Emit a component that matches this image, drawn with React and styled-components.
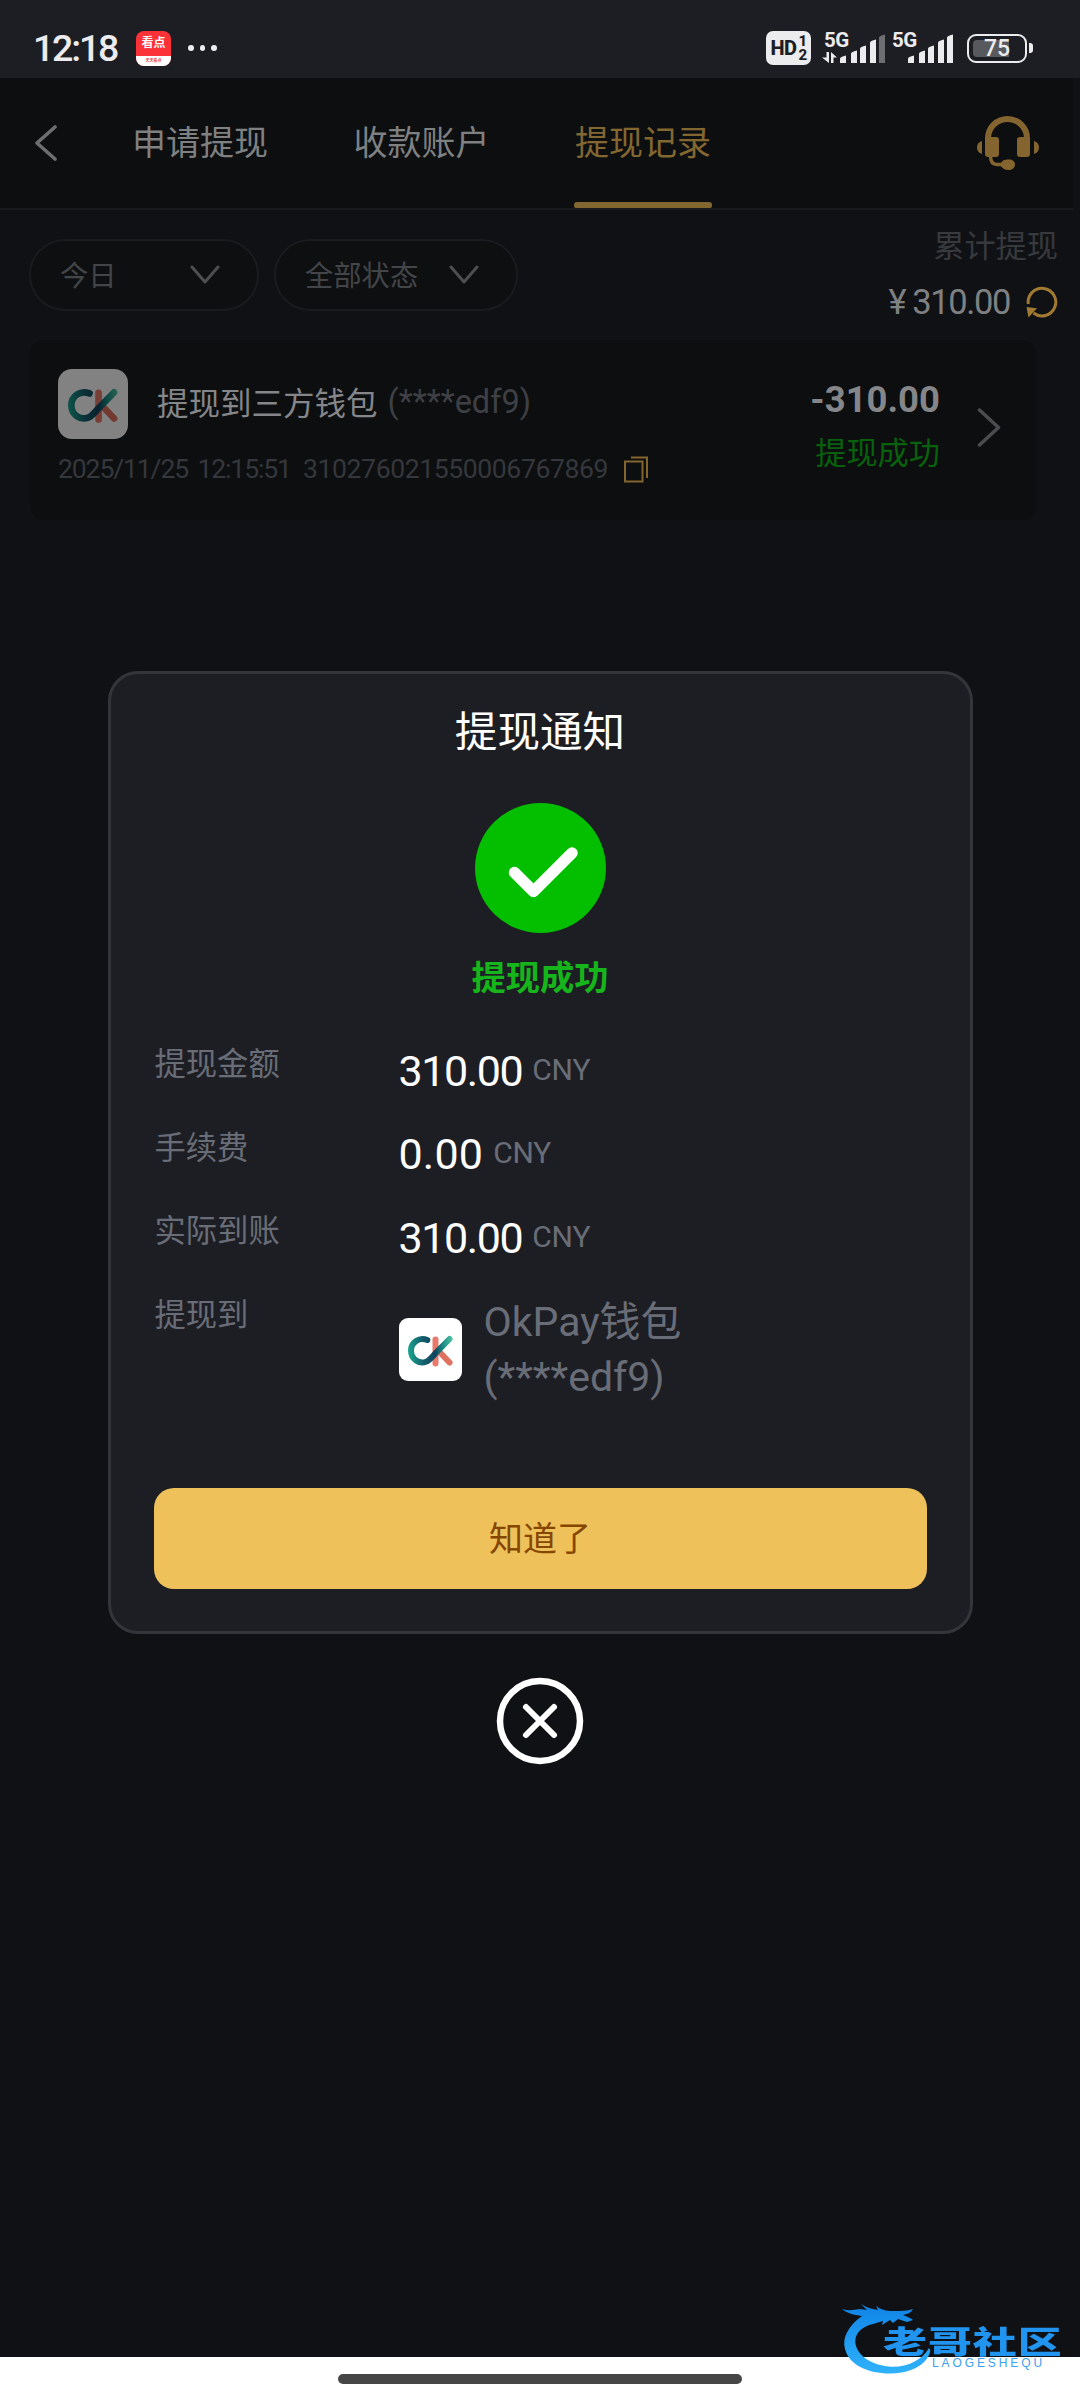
import React from "react";
import styled, { createGlobalStyle } from "styled-components";

const GlobalStyle = createGlobalStyle`
  *, *::before, *::after { box-sizing: border-box; }
  body {
    margin: 0;
    background: #101115;
    font-family: Roboto, "Noto Sans CJK SC", sans-serif;
  }
  button { font-family: inherit; border: 0; padding: 0; background: none; }
`;

const Screen = styled.div`
  position: relative;
  display: flex;
  flex-direction: column;
  width: 1080px;
  height: 2400px;
  overflow: hidden;
  background: #101115;
  white-space: nowrap;
`;

/* Status bar */
const StatusBar = styled.header`
  display: flex;
  align-items: center;
  height: 78px;
  padding: 18px 47px 0 33px;
  background: #1d1e23;
  color: #ececee;
`;
const Clock = styled.span`
  width: 103px;
  font-size: 37.5px;
  font-weight: 500;
  line-height: 60px;
  letter-spacing: -2.2px;
`;
const NewsIcon = styled.span`
  display: flex;
  flex-direction: column;
  width: 35px;
  height: 35px;
  border-radius: 8px;
  overflow: hidden;
  background: #fb3238;
  color: #fff;
  font-size: 12px;
  font-weight: 700;
  line-height: 25px;
  text-align: center;
  flex: none;
`;
const NewsFoot = styled.span`
  height: 10px;
  background: #fff;
  color: #e8474b;
  font-size: 4px;
  line-height: 10px;
`;
const Dots = styled.span`
  display: flex;
  gap: 6px;
  margin-left: 17px;
  flex: 1;
  &::before, &::after, & > i {
    content: "";
    width: 5.5px;
    height: 6px;
    border-radius: 50%;
    background: #ececee;
  }
`;
const HdBadge = styled.span`
  display: flex;
  align-items: center;
  justify-content: center;
  width: 45px;
  height: 34px;
  margin-right: 11px;
  border-radius: 7px;
  background: #ececee;
  color: #1d1e23;
  font-size: 20px;
  font-weight: 800;
  letter-spacing: -0.6px;
`;
const HdStack = styled.span`
  display: flex;
  flex-direction: column;
  margin-left: 2px;
  font-size: 15px;
  line-height: 14px;
`;
const SignalBox = styled.span`
  display: flex;
  flex-direction: column;
  position: relative;
  width: 63px;
  height: 30px;
  margin-right: ${(p) => p.$gap}px;
`;
const SignalLabel = styled.span`
  position: absolute;
  left: 2px;
  top: -1px;
  font-size: 20.5px;
  font-weight: 700;
  line-height: 16px;
  letter-spacing: -0.5px;
`;
const BatteryShell = styled.span`
  position: relative;
  display: flex;
  align-items: center;
  width: 60px;
  height: 29px;
  padding: 0 4px;
  border: 2.5px solid #ececee;
  border-radius: 9px;
`;
const BatteryLevel = styled.span`
  width: 36px;
  height: 17px;
  border-radius: 4px 0 0 4px;
  background: #58595d;
`;
const BatteryText = styled.span`
  position: absolute;
  inset: 0;
  font-size: 23px;
  font-weight: 500;
  line-height: 25px;
  text-align: center;
`;
const BatteryTip = styled.span`
  width: 4px;
  height: 10px;
  margin-left: 2px;
  border-radius: 0 3px 3px 0;
  background: #ececee;
`;

/* Page header */
const NavBar = styled.nav`
  display: flex;
  align-items: stretch;
  height: 132px;
  width: 1073px;
  padding: 0 34px 0 35px;
  border-bottom: 2px solid #181a1e;
  background: #0d0e10;
`;
const BackButton = styled.button`
  display: flex;
  align-items: center;
  width: 96px;
`;
const Tabs = styled.div`
  display: flex;
  gap: 83.5px;
  flex: 1;
`;
const Tab = styled.button`
  width: 138px;
  padding-bottom: 6px;
  font-size: 34px;
  text-align: center;
  color: ${(p) => (p.$active ? "#836730" : "#7f8081")};
  position: relative;
  &::after {
    content: "";
    display: ${(p) => (p.$active ? "block" : "none")};
    position: absolute;
    left: 0;
    right: 0;
    bottom: 0;
    height: 6px;
    border-radius: 3px 3px 2px 2px;
    background: #836730;
  }
`;
const Support = styled.button`
  display: flex;
  align-items: center;
`;

/* Filters */
const Toolbar = styled.section`
  display: flex;
  align-items: flex-start;
  height: 130px;
  padding: 0 22px 0 29px;
`;
const Pill = styled.button`
  display: flex;
  align-items: center;
  justify-content: space-between;
  width: ${(p) => p.$width}px;
  height: 72px;
  margin: 29px 15px 0 0;
  padding: 0 ${(p) => p.$end}px 0 29px;
  border: 2px solid #191b1e;
  border-radius: 36px;
  background: #0d0f10;
  color: #434549;
  font-size: 28.3px;
`;
const PillText = styled.span`
  padding-bottom: 4px;
`;
const Totals = styled.div`
  display: flex;
  flex-direction: column;
  align-items: flex-end;
  margin-left: auto;
  padding-top: 16px;
`;
const TotalsLabel = styled.span`
  font-size: 31.2px;
  line-height: 41px;
  color: #37393d;
`;
const TotalsValue = styled.span`
  display: flex;
  align-items: center;
  margin-top: 12px;
  font-size: 34.5px;
  line-height: 46px;
  letter-spacing: -1.4px;
  color: #7f8081;
  & > svg { margin-left: 16px; }
`;

/* Record */
const Record = styled.article`
  display: flex;
  width: 1006px;
  height: 180px;
  margin-left: 30px;
  padding: 29px 34px 0 28px;
  border-radius: 14px;
  background: #0d0e0f;
`;
const RecordMain = styled.div`
  display: flex;
  flex-direction: column;
  flex: 1;
`;
const RecordTitle = styled.div`
  display: flex;
  align-items: center;
  height: 69px;
  font-size: 31.5px;
  color: #85868a;
`;
const TitleText = styled.span`
  margin-left: 29px;
  padding-bottom: 5px;
`;
const Masked = styled.span`
  margin-left: 10px;
  padding-bottom: 4px;
  color: #3e4045;
  font-size: 32.5px;
`;
const RecordMeta = styled.div`
  display: flex;
  align-items: center;
  height: 40px;
  margin-top: 11px;
  font-size: 26.6px;
  color: #35373d;
`;
const MetaDate = styled.span`
  width: 245px;
  padding-bottom: 2px;
  letter-spacing: -1.15px;
  word-spacing: 4px;
`;
const MetaId = styled.span`
  width: 321px;
  padding-bottom: 2px;
  letter-spacing: -0.42px;
`;
const RecordSide = styled.div`
  display: flex;
  flex-direction: column;
  align-items: flex-end;
  margin-right: 37px;
`;
const Amount = styled.span`
  font-size: 36.5px;
  font-weight: 700;
  line-height: 44px;
  margin-top: 9px;
  color: #858689;
`;
const AmountState = styled.span`
  margin-top: 10px;
  font-size: 31.2px;
  line-height: 44px;
  color: #08610d;
`;
const RecordArrow = styled.div`
  display: flex;
  margin-top: 38px;
`;
const Logo = styled.span`
  display: inline-flex;
  flex: none;
  width: ${(p) => p.$size}px;
  height: ${(p) => p.$size}px;
  border-radius: ${(p) => p.$radius}px;
  background: #fff;
  filter: ${(p) => (p.$dim ? "brightness(0.51)" : "none")};
`;

/* Dialog */
const Overlay = styled.div`
  position: absolute;
  inset: 0;
  display: flex;
  flex-direction: column;
  align-items: center;
  padding-top: 671px;
`;
const Dialog = styled.section`
  display: flex;
  flex-direction: column;
  width: 865px;
  height: 963px;
  padding: 28px 43px 0;
  border: 3px solid #33353b;
  border-radius: 30px;
  background: #1d1e24;
`;
const DialogTitle = styled.h1`
  margin: 0;
  font-size: 42.6px;
  font-weight: 400;
  line-height: 61px;
  text-align: center;
  color: #fff;
`;
const SuccessMark = styled.span`
  align-self: center;
  width: 131px;
  height: 130px;
  margin-top: 40px;
  border-radius: 50%;
  background: #04bf00;
`;
const StatusText = styled.strong`
  margin-top: 20px;
  font-size: 34.2px;
  font-weight: 700;
  line-height: 50px;
  text-align: center;
  color: #16b51b;
`;
const Details = styled.dl`
  display: flex;
  flex-direction: column;
  height: 375px;
  margin: 26px 0 84px;
`;
const DetailRow = styled.div`
  display: flex;
  height: 83.67px;
`;
const DetailLabel = styled.dt`
  width: 245px;
  padding: 16px 0 0 1px;
  font-size: 31.3px;
  line-height: 40px;
  color: #696d77;
`;
const DetailValue = styled.dd`
  display: flex;
  align-items: center;
  margin: 0;
  font-size: 43px;
  line-height: 84px;
  letter-spacing: ${(p) => p.$tight}px;
  color: #fff;
`;
const Currency = styled.span`
  margin-left: 10px;
  padding-bottom: 2px;
  font-size: 30px;
  letter-spacing: -0.2px;
  color: #696d77;
`;
const Destination = styled.dd`
  display: flex;
  align-items: center;
  height: 110px;
  margin: 15px 0 0;
`;
const DestinationText = styled.span`
  margin-left: 22px;
  font-size: 41px;
  line-height: 55px;
  color: #696d77;
`;
const ConfirmButton = styled.button`
  height: 101px;
  padding-bottom: 4px;
  border-radius: 20px;
  background: #efc15b;
  color: #854700;
  font-size: 34px;
`;
const CloseButton = styled.button`
  display: flex;
  margin-top: 43px;
`;

/* Bottom */
const GestureArea = styled.footer`
  display: flex;
  justify-content: center;
  height: 43px;
  margin-top: auto;
  padding-top: 17px;
  background: #fff;
`;
const GestureBar = styled.span`
  width: 404px;
  height: 10px;
  border-radius: 5px;
  background: #464646;
`;
const Watermark = styled.div`
  position: absolute;
  left: 840px;
  top: 2302px;
  width: 228px;
  height: 76px;
`;
const WatermarkArt = styled.svg`
  position: absolute;
  left: 0;
  top: 0;
`;
const WatermarkName = styled.div`
  position: absolute;
  left: 43px;
  top: 22px;
  font-family: "Noto Sans CJK SC", sans-serif;
  font-size: 30.5px;
  font-weight: 900;
  line-height: 32px;
  color: #2094ef;
  letter-spacing: 0.7px;
  transform: scaleX(1.44);
  transform-origin: 0 50%;
`;
const WatermarkLatin = styled.div`
  position: absolute;
  left: 92px;
  top: 55px;
  font-family: "Liberation Sans", sans-serif;
  font-size: 12px;
  line-height: 12px;
  letter-spacing: 2.9px;
  color: #3da0ee;
`;

function OkMark({ size, id }) {
  return (
    <svg width={size} height={size} viewBox="0 0 63 63" fill="none" strokeLinecap="round" strokeWidth="6">
      <defs>
        <linearGradient id={id} gradientUnits="userSpaceOnUse" x1="10" y1="30" x2="54" y2="26">
          <stop offset="0" stopColor="#18a08c" />
          <stop offset="0.3" stopColor="#14606e" />
          <stop offset="0.58" stopColor="#10435c" />
          <stop offset="0.78" stopColor="#1a8f88" />
          <stop offset="1" stopColor="#55c3a4" />
        </linearGradient>
      </defs>
      <path d="M36.500 21.500V45.500" stroke="#e9796a" />
      <path d="M42 35.500L50.500 44.500" stroke="#e0705f" />
      <path d="M28.300 22C20 18.600 12 24.500 12 32.600c0 9 8.300 13.600 15 11.200 3.600-1.300 6.400-5.300 9.400-8.400L50.500 21" stroke={`url(#${id})`} />
    </svg>
  );
}

function Signal({ weak, data, gap }) {
  const bars = [[18, 23], [29, 18], [38, 13], [48, 7], [57, 2]];
  return (
    <SignalBox $gap={gap}>
      <SignalLabel>5G</SignalLabel>
      <svg width="63" height="30">
        {bars.map(([x, y], i) => (
          <path key={x} d={`M${x} ${y + 2.5}Q${x} ${y + 1} ${x + 6} ${y - 0.5}V30H${x}Z`} fill={weak && i === 4 ? "#6d6e72" : "#ececee"} />
        ))}
        {data && <path fill="#ececee" d="M4.500 19H7V30L0 24.500H4.500ZM9 30V19L15 24.500H11.500V30Z" />}
      </svg>
    </SignalBox>
  );
}

function Chevron() {
  return (
    <svg width="30" height="20" fill="none" stroke="#4c4e51" strokeWidth="3" strokeLinecap="round" strokeLinejoin="round">
      <path d="M2 2L15 17L28 2" />
    </svg>
  );
}

const rows = [
  { label: "提现金额", value: "310.00", tight: -1.4 },
  { label: "手续费", value: "0.00", tight: 0.2 },
  { label: "实际到账", value: "310.00", tight: -1.4 },
];

export default function App() {
  return (
    <>
      <GlobalStyle />
      <Screen>
        <StatusBar>
          <Clock>12:18</Clock>
          <NewsIcon>看点<NewsFoot>天天看点</NewsFoot></NewsIcon>
          <Dots><i /></Dots>
          <HdBadge>HD<HdStack><span>1</span><span>2</span></HdStack></HdBadge>
          <Signal weak data gap={5} />
          <Signal gap={14} />
          <BatteryShell><BatteryLevel /><BatteryText>75</BatteryText></BatteryShell>
          <BatteryTip />
        </StatusBar>

        <NavBar>
          <BackButton aria-label="返回">
            <svg width="24" height="36" fill="none" stroke="#6c6e70" strokeWidth="3.6" strokeLinecap="round" strokeLinejoin="round">
              <path d="M20 2L2 18L20 34" />
            </svg>
          </BackButton>
          <Tabs>
            <Tab>申请提现</Tab>
            <Tab>收款账户</Tab>
            <Tab $active>提现记录</Tab>
          </Tabs>
          <Support aria-label="客服">
            <svg width="62" height="54" fill="#84652f">
              <path d="M11 25V22.500A19.500 19.500 0 0 1 50 22.500V25" fill="none" stroke="#84652f" strokeWidth="6" />
              <path d="M8 21h11a3 3 0 0 1 3 3v14a3 3 0 0 1-3 3h-8a3 3 0 0 1-3-3zM53 21v17a3 3 0 0 1-3 3h-7a3 3 0 0 1-3-3V24a3 3 0 0 1 3-3z" />
              <path d="M5 25v13C1.500 37 0 34.500 0 31.500S1.500 26 5 25zM57 25v13c3.500-1 5-3.500 5-6.500S60.500 26 57 25z" />
              <path d="M13.500 40c0 6 2 8.500 6.500 8.500h8" fill="none" stroke="#84652f" strokeWidth="3.500" />
              <path d="M24 47c2-3.500 5-3.500 8-3.500 3.500 0 6 2 6 5s-2.500 5.500-6 5.500c-3 0-6-.5-8-4z" />
            </svg>
          </Support>
        </NavBar>

        <Toolbar>
          <Pill $width={230} $end={37}><PillText>今日</PillText><Chevron /></Pill>
          <Pill $width={244} $end={37}><PillText>全部状态</PillText><Chevron /></Pill>
          <Totals>
            <TotalsLabel>累计提现</TotalsLabel>
            <TotalsValue>
              ¥ 310.00
              <svg width="32" height="32" fill="none">
                <path d="M2.300 18A13.800 13.800 0 1 1 7.500 27" stroke="#a07a32" strokeWidth="3" />
                <path d="M.500 21L11 22.300L2.500 31.500Z" fill="#a07a32" />
              </svg>
            </TotalsValue>
          </Totals>
        </Toolbar>

        <Record>
          <RecordMain>
            <RecordTitle>
              <Logo $size={70} $radius={14} $dim><OkMark size={70} id="okSmall" /></Logo>
              <TitleText>提现到三方钱包</TitleText>
              <Masked>(****edf9)</Masked>
            </RecordTitle>
            <RecordMeta>
              <MetaDate>2025/11/25 12:15:51</MetaDate>
              <MetaId>310276021550006767869</MetaId>
              <svg width="25" height="27" fill="none" stroke="#83652f" strokeWidth="2">
                <path d="M1 5.500H18.500V25.500H1ZM7 1.500H23V22" />
              </svg>
            </RecordMeta>
          </RecordMain>
          <RecordSide>
            <Amount>-310.00</Amount>
            <AmountState>提现成功</AmountState>
          </RecordSide>
          <RecordArrow>
            <svg width="25" height="40" fill="none" stroke="#4a4c4f" strokeWidth="3.500" strokeLinecap="round" strokeLinejoin="round">
              <path d="M2.500 3L21.500 20.500L2.500 38" />
            </svg>
          </RecordArrow>
        </Record>

        <GestureArea><GestureBar /></GestureArea>

        <Overlay>
          <Dialog role="dialog">
            <DialogTitle>提现通知</DialogTitle>
            <SuccessMark>
              <svg width="131" height="130" fill="none" stroke="#fff" strokeWidth="11.500" strokeLinecap="round" strokeLinejoin="round">
                <path d="M39.500 69.500L58.500 88.500L97 50" />
              </svg>
            </SuccessMark>
            <StatusText>提现成功</StatusText>
            <Details>
              {rows.map((r) => (
                <DetailRow key={r.label}>
                  <DetailLabel>{r.label}</DetailLabel>
                  <DetailValue $tight={r.tight}>{r.value}<Currency>CNY</Currency></DetailValue>
                </DetailRow>
              ))}
              <DetailRow>
                <DetailLabel>提现到</DetailLabel>
                <Destination>
                  <Logo $size={63} $radius={9}><OkMark size={63} id="okLarge" /></Logo>
                  <DestinationText>OkPay钱包<br />(****edf9)</DestinationText>
                </Destination>
              </DetailRow>
            </Details>
            <ConfirmButton>知道了</ConfirmButton>
          </Dialog>
          <CloseButton aria-label="关闭">
            <svg width="88" height="88" fill="none" stroke="#fff" strokeLinecap="round">
              <circle cx="44" cy="44" r="40" strokeWidth="6.500" />
              <path d="M30 30L58 58M58 30L30 58" strokeWidth="6" />
            </svg>
          </CloseButton>
        </Overlay>

        <Watermark>
          <WatermarkArt width="110" height="76">
            <defs>
              <linearGradient id="dragon" x1="0" y1="0" x2="0" y2="1">
                <stop offset="0" stopColor="#0f83e6" />
                <stop offset="1" stopColor="#2fb2fb" />
              </linearGradient>
            </defs>
            <path
              fill="url(#dragon)"
              d="M2 7C8 9 14 8 20 7L27 8L21 2C27 6 33 7 38 8L36 4C43 9 49 9 55 9C61 9 67 9 73 7C71 11 67 12 63 13C67 15 71 16 73 18L67 20L58 17L53 21L50 18L42 23L43 19L33 22C20 25 14 33 15.500 42C18 54 32 64 52 64.700C68 65 82 58 89 46C91 48 90 51 89 53C84 64 70 71 52 71.500C28 72 9 63 5 47C2 36 8 24 22 14C14 13 7 11 2 7Z"
            />
          </WatermarkArt>
          <WatermarkName>老哥社区</WatermarkName>
          <WatermarkLatin>LAOGESHEQU</WatermarkLatin>
        </Watermark>
      </Screen>
    </>
  );
}
